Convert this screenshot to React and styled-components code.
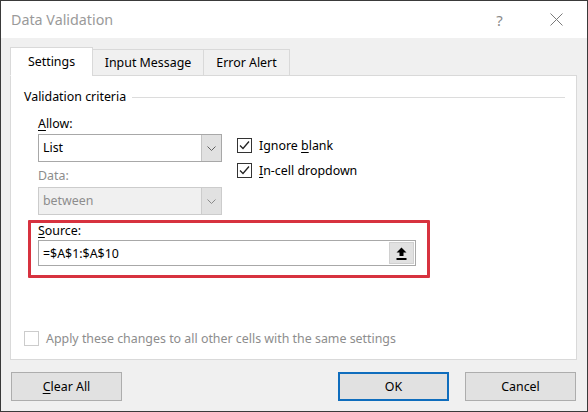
import React from 'react';
import styled, { createGlobalStyle } from 'styled-components';

const GlobalStyle = createGlobalStyle`
  html, body {
    margin: 0;
    padding: 0;
    background: #ffffff;
  }
  * {
    box-sizing: border-box;
  }
`;

const Window = styled.div`
  width: 588px;
  height: 412px;
  display: flex;
  flex-direction: column;
  border: 1px solid #3a3a3a;
  background: #f0f0f0;
  font-family: 'Segoe UI', 'Noto Sans', 'Open Sans', sans-serif;
  font-size: 12.4px;
  color: #000;
`;

const TitleBar = styled.div`
  height: 37px;
  flex: none;
  display: flex;
  align-items: center;
  padding: 0 2px 0 10px;
  background: #ffffff;
`;

const Title = styled.div`
  flex: 1;
  font-size: 14.3px;
  color: #9a9a9a;
  padding-bottom: 1px;
`;

const TitleButton = styled.div`
  width: 57px;
  height: 37px;
  display: flex;
  align-items: center;
  justify-content: center;
  color: #8a8a8a;
  font-size: 15px;
`;

const Body = styled.div`
  flex: 1;
  display: flex;
  flex-direction: column;
  padding: 9px 11px 0 9px;
`;

const TabRow = styled.div`
  display: flex;
  align-items: flex-end;
  height: 29px;
  position: relative;
  z-index: 1;
  margin-bottom: -1px;
`;

const Tab = styled.div`
  width: ${(p) => p.$width}px;
  height: ${(p) => (p.$active ? 29 : 27)}px;
  display: flex;
  align-items: center;
  justify-content: center;
  background: ${(p) => (p.$active ? '#ffffff' : '#f0f0f0')};
  border: 1px solid #d9d9d9;
  border-bottom: ${(p) => (p.$active ? '1px solid #ffffff' : '1px solid #d9d9d9')};
  margin-left: ${(p) => (p.$first ? 0 : -1)}px;
  padding-bottom: 1px;
`;

const Panel = styled.div`
  width: 567px;
  height: 285px;
  display: flex;
  flex-direction: column;
  background: #ffffff;
  border: 1px solid #d9d9d9;
  padding: 12px 11px 11px 13px;
`;

const GroupHeader = styled.div`
  display: flex;
  align-items: center;
  gap: 6px;
  line-height: 17px;
`;

const GroupRule = styled.div`
  flex: 1;
  height: 1px;
  background: #dcdcdc;
  margin-top: 1px;
`;

const Criteria = styled.div`
  display: flex;
  gap: 15px;
  padding-left: 14px;
  margin-top: 10px;
`;

const Column = styled.div`
  display: flex;
  flex-direction: column;
  width: ${(p) => (p.$width ? `${p.$width}px` : 'auto')};
  padding-top: ${(p) => p.$top || 0}px;
  gap: ${(p) => p.$gap || 0}px;
`;

const Label = styled.div`
  line-height: 17px;
  color: ${(p) => (p.$disabled ? '#8d8d8d' : '#000')};
  margin-top: ${(p) => p.$top || 0}px;
`;

const Key = styled.span`
  text-decoration: underline;
  text-underline-offset: 2px;
`;

const Select = styled.div`
  height: 28px;
  display: flex;
  margin-top: ${(p) => p.$top || 0}px;
  border: 1px solid ${(p) => (p.$disabled ? '#cccccc' : '#a8a8a8')};
  background: ${(p) => (p.$disabled ? '#f0f0f0' : '#ffffff')};
  color: ${(p) => (p.$disabled ? '#8d8d8d' : '#000')};
`;

const SelectValue = styled.div`
  flex: 1;
  display: flex;
  align-items: center;
  padding-left: 4px;
  padding-bottom: 1px;
`;

const SelectArrow = styled.div`
  width: 20px;
  display: flex;
  align-items: center;
  justify-content: center;
  background: #e1e1e1;
  border-left: 1px solid ${(p) => (p.$disabled ? '#cccccc' : '#c4c4c4')};
`;

const CheckRow = styled.div`
  height: 20px;
  display: flex;
  align-items: center;
  gap: 7px;
  color: ${(p) => (p.$disabled ? '#8d8d8d' : '#000')};
`;

const Box = styled.div`
  width: 15px;
  height: 15px;
  flex: none;
  display: flex;
  align-items: center;
  justify-content: center;
  border: 1px solid ${(p) => (p.$disabled ? '#cccccc' : '#333333')};
  background: #ffffff;
`;

const SourceBox = styled.div`
  width: 402px;
  margin: 5px 0 0 4px;
  border: 3px solid #d7323f;
  border-radius: 1px;
  padding: 0 11px 9px 7px;
`;

const SourceLabel = styled.div`
  line-height: 15px;
`;

const Input = styled.div`
  height: 26px;
  margin-top: 2px;
  display: flex;
  align-items: center;
  justify-content: space-between;
  border: 1px solid #a8a8a8;
  padding: 0 1px 0 4px;
`;

const PickerButton = styled.div`
  width: 25px;
  height: 22px;
  display: flex;
  align-items: center;
  justify-content: center;
  background: #e1e1e1;
  border: 1px solid #d0d0d0;
`;

const ApplyRow = styled.div`
  margin-top: auto;
`;

const Footer = styled.div`
  display: flex;
  align-items: center;
  margin-top: 12px;
`;

const Button = styled.div`
  width: 112px;
  height: 29px;
  display: flex;
  align-items: center;
  justify-content: center;
  background: #e1e1e1;
  border: ${(p) => (p.$primary ? '2px solid #0f6dbd' : '1px solid #adadad')};
  margin-left: ${(p) => p.$left || 0}px;
  padding-bottom: 1px;
`;

function Chevron({ disabled }) {
  return (
    <svg width="9" height="5" viewBox="0 0 9 5">
      <path d="M0.5 0.5 L4.5 4.5 L8.5 0.5" fill="none" stroke={disabled ? '#8a8a8a' : '#606060'} strokeWidth="1" />
    </svg>
  );
}

function Check() {
  return (
    <svg width="13" height="13" viewBox="0 0 13 13">
      <path d="M2 6.5 L5 9.5 L11 2.5" fill="none" stroke="#222" strokeWidth="1.3" />
    </svg>
  );
}

function UploadIcon() {
  return (
    <svg width="11" height="13" viewBox="0 0 11 13">
      <path d="M5.5 0.5 L10.5 5.5 L7.5 5.5 L7.5 9 L3.5 9 L3.5 5.5 L0.5 5.5 Z" fill="#000" />
      <rect x="0.5" y="11" width="10" height="2" fill="#000" />
    </svg>
  );
}

function CloseIcon() {
  return (
    <svg width="13" height="13" viewBox="0 0 13 13">
      <path d="M0.5 0.5 L12.5 12.5 M12.5 0.5 L0.5 12.5" stroke="#7a7a7a" strokeWidth="1" />
    </svg>
  );
}

export default function App() {
  return (
    <>
      <GlobalStyle />
      <Window>
        <TitleBar>
          <Title>Data Validation</Title>
          <TitleButton>?</TitleButton>
          <TitleButton>
            <CloseIcon />
          </TitleButton>
        </TitleBar>
        <Body>
          <TabRow>
            <Tab $active $first $width={83}>Settings</Tab>
            <Tab $width={112}>Input Message</Tab>
            <Tab $width={87}>Error Alert</Tab>
          </TabRow>
          <Panel>
            <GroupHeader>
              <span>Validation criteria</span>
              <GroupRule />
            </GroupHeader>
            <Criteria>
              <Column $width={184}>
                <Label>
                  <Key>A</Key>llow:
                </Label>
                <Select $top={2}>
                  <SelectValue>List</SelectValue>
                  <SelectArrow>
                    <Chevron />
                  </SelectArrow>
                </Select>
                <Label $disabled $top={5}>
                  Data:
                </Label>
                <Select $disabled $top={3}>
                  <SelectValue>between</SelectValue>
                  <SelectArrow $disabled>
                    <Chevron disabled />
                  </SelectArrow>
                </Select>
              </Column>
              <Column $top={20} $gap={5}>
                <CheckRow>
                  <Box>
                    <Check />
                  </Box>
                  <span>
                    Ignore <Key>b</Key>lank
                  </span>
                </CheckRow>
                <CheckRow>
                  <Box>
                    <Check />
                  </Box>
                  <span>
                    <Key>I</Key>n-cell dropdown
                  </span>
                </CheckRow>
              </Column>
            </Criteria>
            <SourceBox>
              <SourceLabel>
                <Key>S</Key>ource:
              </SourceLabel>
              <Input>
                <span>=$A$1:$A$10</span>
                <PickerButton>
                  <UploadIcon />
                </PickerButton>
              </Input>
            </SourceBox>
            <ApplyRow>
              <CheckRow $disabled>
                <Box $disabled />
                <span>Apply these changes to all other cells with the same settings</span>
              </CheckRow>
            </ApplyRow>
          </Panel>
          <Footer>
            <Button $left={1}>
              <span>
                <Key>C</Key>lear All
              </span>
            </Button>
            <Button $primary $left={216}>OK</Button>
            <Button $left={16}>Cancel</Button>
          </Footer>
        </Body>
      </Window>
    </>
  );
}
